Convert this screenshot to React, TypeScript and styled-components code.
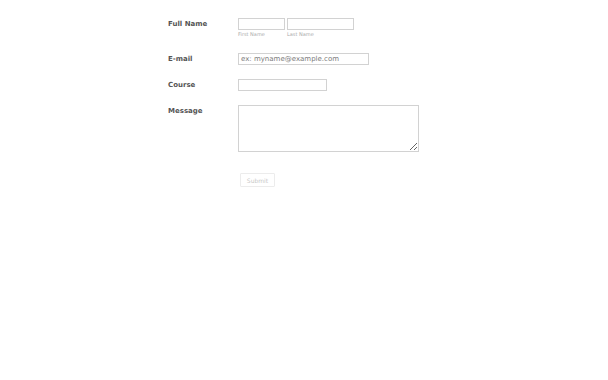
import React from "react";
import styled, { createGlobalStyle } from "styled-components";

const Global = createGlobalStyle`
   html, body {
      margin: 0;
      padding: 0;
      background: #ffffff;
   }
   body {
      font-family: "DejaVu Sans", Verdana, sans-serif;
   }
`;

const Form = styled.form`
   display: flex;
   flex-direction: column;
   padding: 18px 0 0 168px;
`;

const Row = styled.div<{ $gap: number }>`
   display: grid;
   grid-template-columns: 70px auto;
   align-items: start;
   margin-bottom: ${(p) => p.$gap}px;
`;

const Label = styled.label`
   font-size: 7px;
   font-weight: bold;
   color: #555555;
   padding-top: 1px;
   line-height: 10px;
`;

const Field = styled.div`
   display: flex;
   gap: 2px;
`;

const NamePart = styled.div`
   display: flex;
   flex-direction: column;
`;

const Input = styled.input<{ $w: number }>`
   box-sizing: border-box;
   width: ${(p) => p.$w}px;
   height: 12px;
   margin: 0;
   padding: 0 2px;
   border: 1px solid #d2d2d2;
   border-radius: 0;
   font-family: "DejaVu Sans", Verdana, sans-serif;
   font-size: 7px;
   color: #555555;
   outline: none;

   &::placeholder {
      color: #7a7a7a;
   }
`;

const SubLabel = styled.span`
   font-size: 5px;
   font-weight: normal;
   color: #aaaaaa;
   margin-top: 1px;
   line-height: 7px;
`;

const TextArea = styled.textarea`
   box-sizing: border-box;
   width: 181px;
   height: 47px;
   margin: 0;
   padding: 2px;
   border: 1px solid #d2d2d2;
   border-radius: 0;
   font-family: "DejaVu Sans", Verdana, sans-serif;
   font-size: 7px;
   outline: none;
`;

const SubmitRow = styled.div`
   display: flex;
   padding-left: 72px;
`;

const Submit = styled.button`
   box-sizing: border-box;
   width: 35px;
   height: 14px;
   padding: 0;
   background: #ffffff;
   border: 1px solid #ececec;
   border-radius: 1px;
   font-family: "DejaVu Sans", Verdana, sans-serif;
   font-size: 6px;
   color: #c8c8c8;
`;

export default function App() {
   return (
      <>
         <Global />
         <Form onSubmit={(e) => e.preventDefault()}>
            <Row $gap={15}>
               <Label>Full Name</Label>
               <Field>
                  <NamePart>
                     <Input $w={47} />
                     <SubLabel>First Name</SubLabel>
                  </NamePart>
                  <NamePart>
                     <Input $w={67} />
                     <SubLabel>Last Name</SubLabel>
                  </NamePart>
               </Field>
            </Row>
            <Row $gap={14}>
               <Label>E-mail</Label>
               <Input $w={131} placeholder="ex: myname@example.com" />
            </Row>
            <Row $gap={14}>
               <Label>Course</Label>
               <Input $w={89} />
            </Row>
            <Row $gap={21}>
               <Label>Message</Label>
               <TextArea />
            </Row>
            <SubmitRow>
               <Submit type="submit">Submit</Submit>
            </SubmitRow>
         </Form>
      </>
   );
}
